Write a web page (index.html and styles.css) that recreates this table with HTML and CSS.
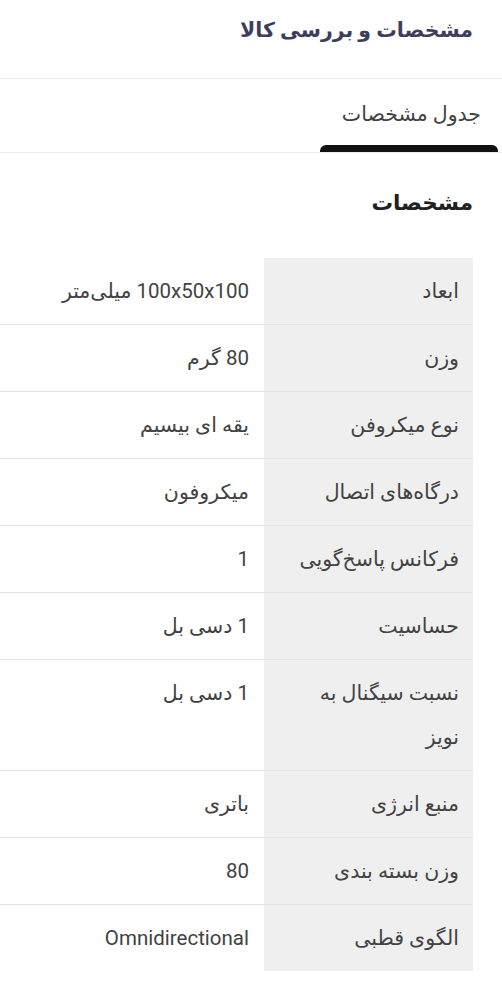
FILE: index.html
```html
<!DOCTYPE html>
<html lang="fa" dir="rtl">
<head>
<meta charset="utf-8">
<link rel="stylesheet" href="styles.css">
</head>
<body>
<div class="page">
  <header class="top">
    <h1 class="title">مشخصات و بررسی کالا</h1>
  </header>
  <nav class="tabs">
    <div class="tab active">جدول مشخصات</div>
  </nav>
  <section class="specs">
    <h2 class="heading">مشخصات</h2>
    <div class="table-wrap">
      <table class="spec-table">
        <tr><th>ابعاد</th><td>100x50x100 میلی‌متر</td></tr>
        <tr><th>وزن</th><td>80 گرم</td></tr>
        <tr><th>نوع میکروفن</th><td>یقه ای بیسیم</td></tr>
        <tr><th>درگاه‌های اتصال</th><td>میکروفون</td></tr>
        <tr><th>فرکانس پاسخ‌گویی</th><td>1</td></tr>
        <tr><th>حساسیت</th><td>1 دسی بل</td></tr>
        <tr><th>نسبت سیگنال به نویز</th><td>1 دسی بل</td></tr>
        <tr><th>منبع انرژی</th><td>باتری</td></tr>
        <tr><th>وزن بسته بندی</th><td>80</td></tr>
        <tr><th>الگوی قطبی</th><td>Omnidirectional</td></tr>
      </table>
    </div>
  </section>
</div>
</body>
</html>
```
FILE: styles.css
```css
* { box-sizing: border-box; }
html, body { margin: 0; padding: 0; background: #fff; }
body {
  font-family: Roboto, "DejaVu Sans", sans-serif;
  direction: rtl;
  color: #424242;
  overflow: hidden;
}
.page { width: 502px; }
.top {
  height: 79px;
  border-bottom: 1px solid #ececec;
  padding: 12px 29px 0 0;
}
.title {
  margin: 0;
  font-size: 20.5px;
  font-weight: bold;
  color: #3e3d5c;
  line-height: 36px;
}
.tabs {
  height: 74px;
  border-bottom: 1px solid #ececec;
  display: flex;
  padding-right: 4px;
}
.tab {
  position: relative;
  width: 178px;
  padding: 17px 17px 0 0;
  font-size: 20.5px;
  line-height: 36px;
  color: #424242;
}
.tab.active::after {
  content: "";
  position: absolute;
  left: 0;
  right: 0;
  bottom: 0;
  height: 7px;
  background: #111;
  border-radius: 6px 6px 0 0;
}
.specs {
  padding: 28px 29px 0 0;
}
.heading {
  margin: 0;
  font-size: 21.5px;
  font-weight: bold;
  color: #212121;
  line-height: 44px;
  height: 77px;
}
.table-wrap {
  width: 473px;
  overflow: hidden;
}
.spec-table {
  border-collapse: collapse;
  width: 520px;
}
.spec-table tr { border-bottom: 1px solid #e4e4e4; }
.spec-table tr:last-child { border-bottom: none; }
.spec-table th,
.spec-table td {
  text-align: right;
  vertical-align: top;
  font-weight: normal;
  font-size: 20.5px;
  line-height: 44px;
  padding: 11px 14px 11px 14px;
  color: #424242;
}
.spec-table th {
  width: 209px;
  padding-left: 34px;
  background: #efefef;
}
.spec-table td { padding-right: 15px; }
```
